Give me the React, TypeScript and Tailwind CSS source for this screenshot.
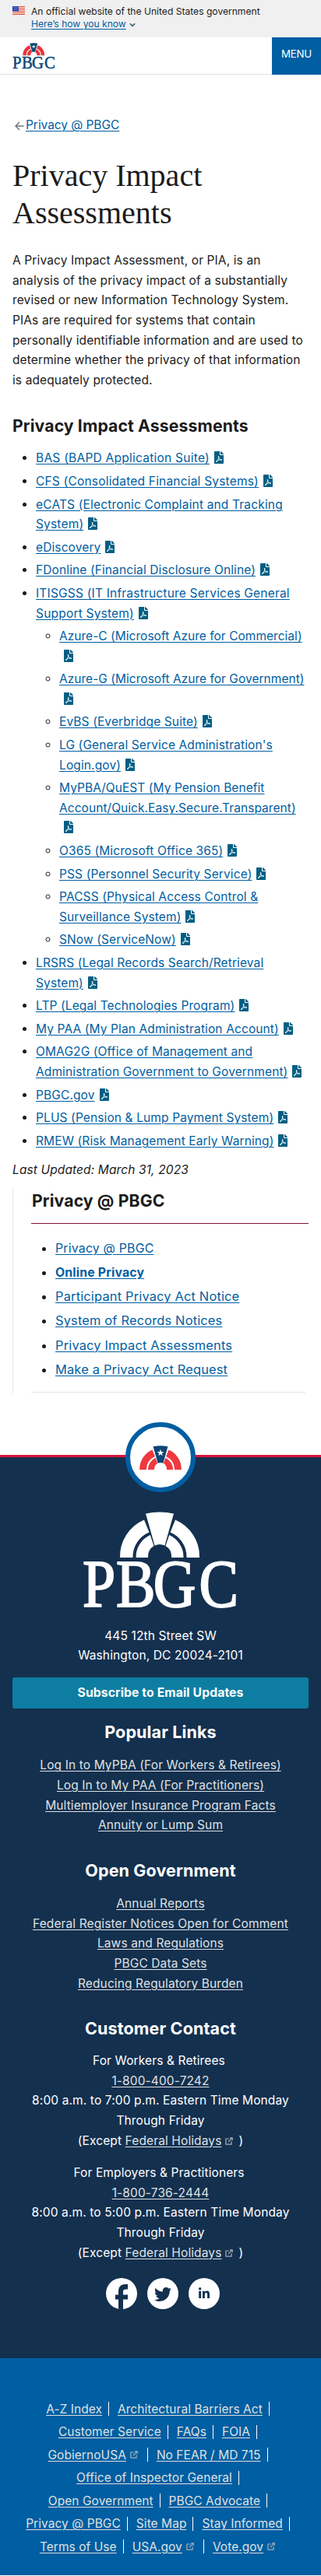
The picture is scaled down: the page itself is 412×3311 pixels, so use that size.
import type { ReactNode } from "react";
import { FaFilePdf, FaTwitter, FaLinkedinIn } from "react-icons/fa";

type Doc = { title: string; iconBelow?: boolean; spacing?: string; children?: Doc[] };

const documents: Doc[] = [
  { title: "BAS (BAPD Application Suite)", spacing: "tracking-[0.25px]" },
  { title: "CFS (Consolidated Financial Systems)", spacing: "tracking-[0.2px]" },
  { title: "eCATS (Electronic Complaint and Tracking\nSystem)", spacing: "tracking-[0.17px]" },
  { title: "eDiscovery" },
  { title: "FDonline (Financial Disclosure Online)" },
  {
    title: "ITISGSS (IT Infrastructure Services General\nSupport System)",
    spacing: "tracking-[0.2px]",
    children: [
      { title: "Azure-C (Microsoft Azure for Commercial)", iconBelow: true, spacing: "tracking-[0.03px]" },
      { title: "Azure-G (Microsoft Azure for Government)", iconBelow: true, spacing: "tracking-[0.03px]" },
      { title: "EvBS (Everbridge Suite)" },
      { title: "LG (General Service Administration's\nLogin.gov)" },
      {
        title: "MyPBA/QuEST (My Pension Benefit\nAccount/Quick.Easy.Secure.Transparent)",
        iconBelow: true,
        spacing: "tracking-[0.06px]",
      },
      { title: "O365 (Microsoft Office 365)" },
      { title: "PSS (Personnel Security Service)" },
      { title: "PACSS (Physical Access Control &\nSurveillance System)" },
      { title: "SNow (ServiceNow)" },
    ],
  },
  { title: "LRSRS (Legal Records Search/Retrieval\nSystem)" },
  { title: "LTP (Legal Technologies Program)" },
  { title: "My PAA (My Plan Administration Account)" },
  { title: "OMAG2G (Office of Management and\nAdministration Government to Government)" },
  { title: "PBGC.gov" },
  { title: "PLUS (Pension & Lump Payment System)" },
  { title: "RMEW (Risk Management Early Warning)" },
];

const sideLinks = [
  "Privacy @ PBGC",
  "Online Privacy",
  "Participant Privacy Act Notice",
  "System of Records Notices",
  "Privacy Impact Assessments",
  "Make a Privacy Act Request",
];

const popularLinks = [
  "Log In to MyPBA (For Workers & Retirees)",
  "Log In to My PAA (For Practitioners)",
  "Multiemployer Insurance Program Facts",
  "Annuity or Lump Sum",
];

const governmentLinks = [
  "Annual Reports",
  "Federal Register Notices Open for Comment",
  "Laws and Regulations",
  "PBGC Data Sets",
  "Reducing Regulatory Burden",
];

type NavItem = { label: string; external?: boolean; last?: boolean };

const navRows: NavItem[][] = [
  [{ label: "A-Z Index" }, { label: "Architectural Barriers Act" }],
  [{ label: "Customer Service" }, { label: "FAQs" }, { label: "FOIA" }],
  [{ label: "GobiernoUSA", external: true }, { label: "No FEAR / MD 715" }],
  [{ label: "Office of Inspector General" }],
  [{ label: "Open Government" }, { label: "PBGC Advocate" }],
  [{ label: "Privacy @ PBGC" }, { label: "Site Map" }, { label: "Stay Informed" }],
  [{ label: "Terms of Use" }, { label: "USA.gov", external: true }, { label: "Vote.gov", external: true, last: true }],
];

function Link({ children, className = "text-[#005ea2]" }: { children: ReactNode; className?: string }) {
  return (
    <a href="#" className={`underline decoration-1 underline-offset-2 ${className}`}>
      {children}
    </a>
  );
}

/* Sunburst mark: two striped quarter arches with a keystone between them. */
function Arch({ arch, keystone, star }: { arch: string; keystone: string; star?: string }) {
  return (
    <>
      <path fill={arch} d="M0 59A51 51 0 0 1 31 10.500L37.500 26.500A34 34 0 0 0 16.500 59ZM20.500 59A31 31 0 0 1 38.800 30L43.500 44A16 16 0 0 0 36 59Z" />
      <path fill={arch} d="M102 59A51 51 0 0 0 71 10.500L64.500 26.500A34 34 0 0 1 85.500 59ZM81.500 59A31 31 0 0 0 63.200 30L58.500 44A16 16 0 0 1 66 59Z" />
      <path fill={keystone} d="M33 2.500Q51 -1.500 69 2.500L57.500 43.500Q51 40.500 44.500 43.500Z" />
      {star && <path fill={star} d="M51 9L53.200 15H59.500L54.500 19L56.300 25L51 21.500L45.700 25L47.500 19L42.500 15H48.800Z" />}
    </>
  );
}

function Logo({ className, text, arch, keystone, star }: { className: string; text: string; arch: string; keystone: string; star?: string }) {
  return (
    <svg viewBox="0 0 200 124" className={`overflow-visible ${className}`} role="img" aria-label="PBGC">
      <g transform="translate(48 0)">
        <Arch arch={arch} keystone={keystone} star={star} />
      </g>
      <text
        transform="translate(0 122) scale(.88 1)"
        x="0 49 103 170"
        fontFamily="Liberation Serif, serif"
        fontSize="86"
        fill={text}
        stroke={text}
        strokeWidth="2"
      >
        PBGC
      </text>
    </svg>
  );
}

function Flag() {
  return (
    <svg viewBox="0 0 16 11" className="mt-2 h-[11px] w-4 shrink-0">
      <path fill="#fff" d="M0 0h16v11H0z" />
      <path stroke="#db3e1f" strokeWidth="1" d="M0 .5h16M0 2.500h16M0 4.500h16M0 6.500h16M0 8.500h16M0 10.500h16" />
      <path fill="#1e33b1" d="M0 0h8v6.500H0z" />
      <path stroke="#fff" strokeWidth=".8" strokeDasharray=".8 1.200" d="M1 1.300h6.500M2 3.100h5.500M1 4.900h6.500" />
    </svg>
  );
}

function ExternalIcon({ className = "" }: { className?: string }) {
  return (
    <svg viewBox="0 0 10 10" className={`inline-block size-[10px] text-[#a9aeb1] ${className}`} fill="none" stroke="currentColor">
      <path strokeWidth="1.200" d="M5 2H.9v7.200h7.200V5.300" />
      <path strokeWidth="1.200" d="M4 6L8.600 1.400M6 .9h3.200V4" />
    </svg>
  );
}

function DocItem({ doc }: { doc: Doc }) {
  return (
    <li className="mb-1 whitespace-pre last:mb-0">
      <Link className={`text-[#005ea2] ${doc.spacing ?? ""}`}>{doc.title}</Link>
      {doc.iconBelow && <br />}
      <FaFilePdf className="ml-1.5 inline-block h-4 w-3 align-[-2px] text-[#005f83]" />
      {doc.children && (
        <ul className="mt-1 list-[circle] pl-[30px]">
          {doc.children.map((c) => (
            <DocItem key={c.title} doc={c} />
          ))}
        </ul>
      )}
    </li>
  );
}

function FooterLinks({ title, links, className }: { title: string; links: string[]; className: string }) {
  return (
    <section className={className}>
      <h3 className="mb-[17px] text-[21.5px] leading-[26px] font-bold">{title}</h3>
      <ul>
        {links.map((l) => (
          <li key={l} className="whitespace-nowrap">
            <Link className="text-[#dfe1e2]">{l}</Link>
          </li>
        ))}
      </ul>
    </section>
  );
}

function Contact({ audience, phone, hours }: { audience: string; phone: string; hours: string }) {
  return (
    <div className="mb-4 whitespace-nowrap">
      <div className="pr-1">{audience}</div>
      <div>
        <Link className="text-[#dfe1e2]">{phone}</Link>
      </div>
      <div>{hours}</div>
      <div>Through Friday</div>
      <div>
        (Except <Link className="text-[#dfe1e2]">Federal Holidays</Link>
        <ExternalIcon className="mr-[7px] ml-[5px]" />)
      </div>
    </div>
  );
}

export default function App() {
  return (
    <div className="min-h-[3311px] w-[412px] overflow-hidden bg-white font-['Inter','Public_Sans',sans-serif] text-[15.5px] leading-[25.6px] tracking-[0.12px] text-[#1b1b1b]">
      <div className="flex h-12 gap-2 bg-[#f0f0f0] pl-4">
        <Flag />
        <div className="pt-[7px] text-[12.1px] leading-4 tracking-normal whitespace-nowrap">
          <div>An official website of the United States government</div>
          <div className="flex items-center gap-1">
            <Link>Here’s how you know</Link>
            <svg viewBox="0 0 8 6" className="mt-0.5 h-1.5 w-2" fill="none" stroke="#2c5f6f" strokeWidth="1.500">
              <path d="M.8 1.200L4 4.400L7.200 1.200" />
            </svg>
          </div>
        </div>
      </div>

      <header className="flex h-12 justify-between">
        <div className="flex-1 border-b border-[#dfe1e2] pt-[7px] pl-4">
          <Logo className="h-[34px] w-[55px]" text="#0b4778" arch="#e8353f" keystone="#0b4778" star="#fff" />
        </div>
        <button className="w-[63px] bg-[#005ea2] pb-1 text-[13.3px] tracking-[-0.2px] text-white">MENU</button>
      </header>

      <main className="px-4 pt-[52px]">
        <div className="flex items-center">
          <svg viewBox="0 0 12 12" className="mt-[2px] ml-[3px] size-3" fill="none" stroke="#71767a" strokeWidth="1.500">
            <path d="M11.500 6H1.200M6 1L1 6l5 5" />
          </svg>
          <span className="ml-[2px] tracking-[-0.05px]">
            <Link>Privacy @ PBGC</Link>
          </span>
        </div>
        <h1 className="mt-7 font-['Liberation_Serif',serif] text-[40px] leading-[48px] tracking-normal">
          Privacy Impact
          <br />
          Assessments
        </h1>
        <p className="mt-[24.6px] whitespace-pre">
          {
            "A Privacy Impact Assessment, or PIA, is an\nanalysis of the privacy impact of a substantially\nrevised or new Information Technology System.\nPIAs are required for systems that contain\npersonally identifiable information and are used to\ndetermine whether the privacy of that information\nis adequately protected."
          }
        </p>
        <h2 className="mt-[33px] mb-4 text-[21.2px] leading-[26px] font-bold">Privacy Impact Assessments</h2>
        <ul className="list-disc pl-[30px]">
          {documents.map((d) => (
            <DocItem key={d.title} doc={d} />
          ))}
        </ul>
        <p className="mt-3 italic">Last Updated: March 31, 2023</p>

        <aside className="mt-[10.2px] h-[264px] border-l border-[#e6e6e6] pl-[23px]">
          <h2 className="border-b border-[#7d1230] pt-[3px] pb-[16px] pl-px text-[21.2px] leading-[26px] font-bold">Privacy @ PBGC</h2>
          <ul className="mr-1 list-disc border-b border-[#e6e6e6] pt-[18px] pb-[15px] pl-[31px] text-[16.4px] leading-[27.1px] tracking-[0.18px]">
            {sideLinks.map((l) => (
              <li key={l} className="mb-1 last:mb-0">
                <Link
                  className={
                    l === "Online Privacy"
                      ? "text-[15.8px] font-bold text-[#005ea2]"
                      : l === "Privacy @ PBGC"
                        ? "text-[15.9px] text-[#005ea2]"
                        : "text-[#005ea2]"
                  }
                >
                  {l}
                </Link>
              </li>
            ))}
          </ul>
        </aside>
      </main>

      <footer className="relative mt-[79px] border-t-[3px] border-[#d9163c] text-center">
        <div className="absolute top-[-45px] left-[161px] flex size-[90px] items-center justify-center rounded-full border-[6px] border-[#005ea2] bg-white">
          <svg viewBox="0 0 102 59" className="h-[31px] w-[54px]">
            <Arch arch="#f0383f" keystone="#0b4778" star="#fff" />
          </svg>
        </div>
        <div className="h-[1158px] bg-[#14304f] px-4 pt-[69.500px] text-white">
          <Logo className="mx-auto h-[124px] w-[200px]" text="#fff" arch="#fff" keystone="#fff" />
          <address className="mt-[23px] not-italic">
            445 12th Street SW
            <br />
            Washington, DC 20024-2101
          </address>
          <button className="mt-[15.500px] block h-10 w-full rounded-[3px] bg-[#0d7ea2] pb-px text-[15.7px] font-bold">
            Subscribe to Email Updates
          </button>
          <FooterLinks title="Popular Links" links={popularLinks} className="mt-[17px]" />
          <FooterLinks title="Open Government" links={governmentLinks} className="mt-[32.500px]" />
          <section className="mt-8">
            <h3 className="mb-4 text-[21.5px] leading-[26px] font-bold">Customer Contact</h3>
            <Contact audience="For Workers & Retirees" phone="1-800-400-7242" hours="8:00 a.m. to 7:00 p.m. Eastern Time Monday" />
            <Contact audience="For Employers & Practitioners" phone="1-800-736-2444" hours="8:00 a.m. to 5:00 p.m. Eastern Time Monday" />
          </section>
          <div className="mt-5 flex justify-center gap-[13px] pl-[6px]">
            <a href="#" aria-label="Facebook" className="size-10 overflow-hidden rounded-full bg-white">
              <svg viewBox="0 0 40 40" className="size-10" fill="#14304f">
                <path d="M16 40V27.500H12V21.500H16V17.500C16 11.500 19 8 24.500 8H28V14.500H25.500C23 14.500 22 15.500 22 17.500V21.500H28V27.500H22V40Z" />
              </svg>
            </a>
            <a href="#" aria-label="Twitter" className="flex size-10 items-center justify-center rounded-full bg-white text-[#14304f]">
              <FaTwitter className="mt-0.5 size-[22px]" />
            </a>
            <a href="#" aria-label="LinkedIn" className="flex size-10 items-center justify-center rounded-full bg-white text-[#14304f]">
              <FaLinkedinIn className="size-4" />
            </a>
          </div>
        </div>
        <nav className="h-[279px] bg-[#005ea2] pt-[52.500px] pl-1 text-[#dfe1e2]">
          {navRows.map((row, i) => (
            <div key={i} className="mb-[3.9px] flex justify-center whitespace-nowrap">
              {row.map((item) => (
                <div key={item.label} className="flex items-center tracking-[0.05px]">
                  <Link className="text-[#dfe1e2]">{item.label}</Link>
                  {item.external && <ExternalIcon className="mr-1 ml-[5px]" />}
                  {!item.last && <span className="mr-[11px] ml-2 h-[18px] w-px bg-white" />}
                  {item.last && <span className="w-2" />}
                </div>
              ))}
            </div>
          ))}
        </nav>
      </footer>
    </div>
  );
}
